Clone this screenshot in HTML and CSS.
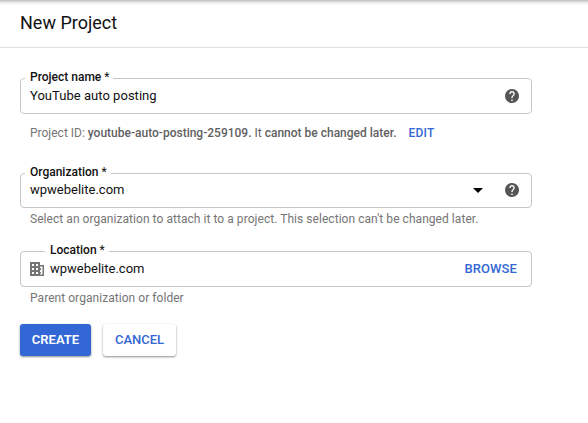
FILE: index.html
```html
<!DOCTYPE html>
<html lang="en">
<head>
<meta charset="utf-8">
<title>New Project</title>
<link rel="stylesheet" href="styles.css">
</head>
<body>
<header class="header"><h1 class="title">New Project</h1></header>
<main class="form">
  <div class="field field-name">
    <label class="label">Project name <span class="star">*</span></label>
    <span class="value value-name">YouTube auto posting</span>
    <svg class="help" viewBox="2 2 20 20"><path d="M12 2C6.48 2 2 6.48 2 12s4.48 10 10 10 10-4.48 10-10S17.52 2 12 2zm1 17h-2v-2h2v2zm2.07-7.75l-.9.92C13.45 12.9 13 13.5 13 15h-2v-.5c0-1.1.45-2.1 1.17-2.83l1.24-1.26c.37-.36.59-.86.59-1.41 0-1.1-.9-2-2-2s-2 .9-2 2H8c0-2.21 1.79-4 4-4s4 1.79 4 4c0 .88-.36 1.68-.93 2.25z"/></svg>
  </div>
  <p class="project-id"><span class="id-label">Project ID:</span> <span class="id-text">youtube-auto-posting-259109. <span class="star">It</span> cannot be changed later.</span><a class="link edit">EDIT</a></p>
  <div class="field field-org">
    <label class="label">Organization <span class="star">*</span></label>
    <span class="value">wpwebelite.com</span>
    <svg class="arrow" viewBox="0 0 10 5"><path d="M0 0h10L5 5z"/></svg>
    <svg class="help" viewBox="2 2 20 20"><path d="M12 2C6.48 2 2 6.48 2 12s4.48 10 10 10 10-4.48 10-10S17.52 2 12 2zm1 17h-2v-2h2v2zm2.07-7.75l-.9.92C13.45 12.9 13 13.5 13 15h-2v-.5c0-1.1.45-2.1 1.17-2.83l1.24-1.26c.37-.36.59-.86.59-1.41 0-1.1-.9-2-2-2s-2 .9-2 2H8c0-2.21 1.79-4 4-4s4 1.79 4 4c0 .88-.36 1.68-.93 2.25z"/></svg>
  </div>
  <p class="hint hint-org">Select an organization to attach it to a project. This selection can't be changed later.</p>
  <div class="field field-location">
    <label class="label label-location">Location <span class="star">*</span></label>
    <svg class="building" viewBox="0 0 14 14"><path fill-rule="evenodd" d="M0 0h10v3h4v11H0zM2 2v2h2V2zM6 2v2h2V2zM2 6v2h2V6zM6 6v2h2V6zM2 10v2h2v-2zM6 10v2h2v-2zM10 4.500V6h1v2h-1v2h1v1.500h-1v1h2.500v-8z"/></svg>
    <span class="value">wpwebelite.com</span>
    <a class="link browse">BROWSE</a>
  </div>
  <p class="hint">Parent organization or folder</p>
  <div class="actions">
    <button class="button create">CREATE</button>
    <button class="button cancel">CANCEL</button>
  </div>
</main>
</body>
</html>
```

FILE: styles.css
```css
* { box-sizing: border-box; }
body { margin: 0; background: #fff; font-family: Roboto, sans-serif; color: #212121; height: 423px; overflow: hidden; }
.header { height: 48px; padding: 11px 20px 0; border-bottom: 1px solid #e0e0e0; background: linear-gradient(#b8b8b8 0, #d0d0d0 1px, #efefef 3px, #fff 5px); }
.title { margin: 0; font-size: 18px; line-height: 24px; font-weight: 400; color: #111; }
.form { width: 552px; padding: 30px 20px 0; }
.field { position: relative; display: flex; align-items: center; width: 512px; height: 36px; border: 1px solid #c6c6c6; border-radius: 4px; padding: 0 12px 0 9px; }
.label { position: absolute; left: 4px; top: -9px; padding: 0 4px 0 5px; background: #fff; font-size: 12px; line-height: 14px; font-weight: 500; color: #111; white-space: nowrap; }
.star { font-weight: 400; }
.label-location { left: 24px; }
.value { flex: 1; font-size: 13px; line-height: 18px; color: #111; }
.value-name { letter-spacing: 0.03px; }
.help { width: 14px; height: 14px; fill: #555; }
.arrow { width: 10px; height: 5px; margin-right: 22px; }
.building { width: 14px; height: 14px; fill: #757575; margin-right: 6px; }
.project-id { display: flex; gap: 3px; margin: 0; padding: 11px 0 0 10px; height: 59px; font-size: 12px; line-height: 16px; white-space: nowrap; }
.id-label { color: #757575; }
.id-text { color: #616161; font-weight: 500; }
.link { color: #3367d6; font-weight: 500; }
.edit { margin-left: 9px; letter-spacing: 0.2px; }
.field-org { height: 35px; padding-bottom: 1px; }
.hint { margin: 0; padding: 3px 0 0 10px; height: 37px; font-size: 12px; line-height: 16px; letter-spacing: 0.05px; color: #757575; white-space: nowrap; }
.hint-org { height: 43px; }
.browse { font-size: 13px; line-height: 18px; letter-spacing: 0.1px; margin-right: 2px; padding-bottom: 1px; }
.actions { display: flex; gap: 12px; }
.button { height: 32px; padding: 0; border: 0; border-radius: 3px; font: 500 13px/32px Roboto, sans-serif; box-shadow: 0 1px 2px rgba(0,0,0,.35), 0 1px 3px rgba(0,0,0,.12); }
.create { width: 71px; background: #3367d6; color: #fff; font-weight: 600; }
.cancel { width: 73px; background: #fff; color: #3367d6; }
```
